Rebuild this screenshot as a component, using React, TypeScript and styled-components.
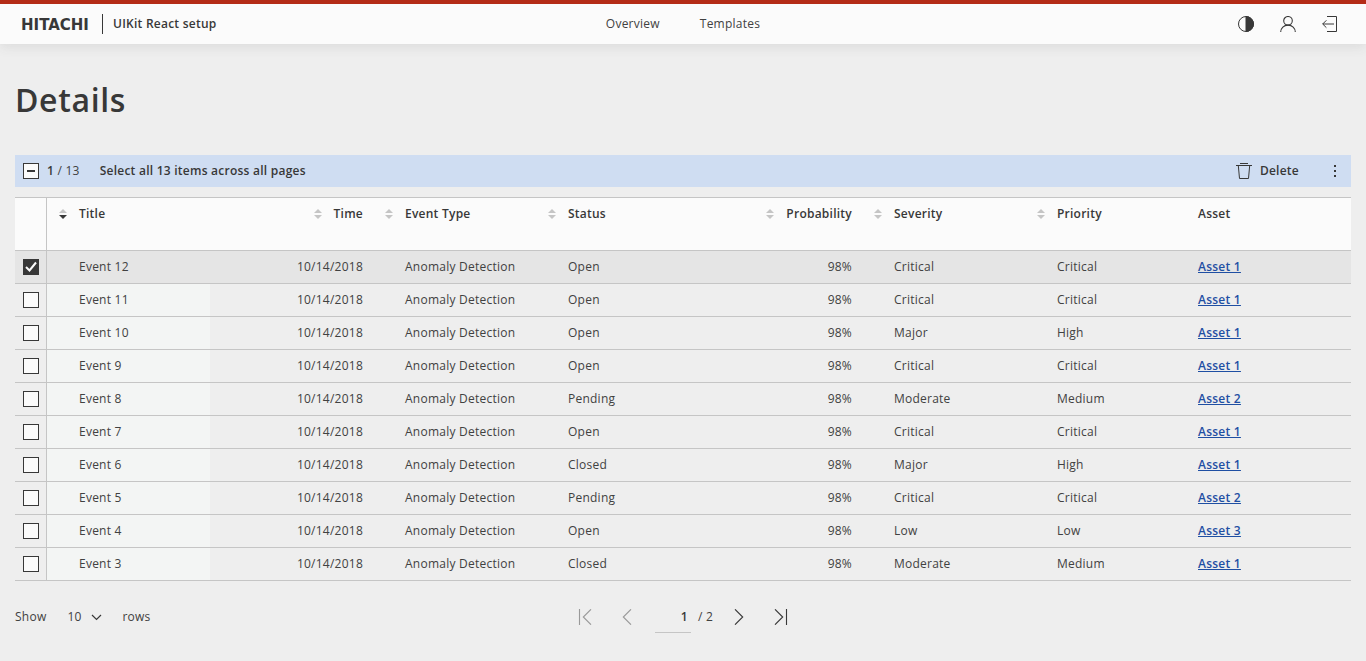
import { useEffect, useRef, useState } from "react";
import styled, { createGlobalStyle } from "styled-components";

const color = {
  brand: "#b42c17",
  page: "#eeeeee",
  surface: "#fbfbfb",
  selected: "#e5e5e5",
  sorted: "#f3f5f4",
  line: "#c5c5c5",
  ink: "#383838",
  text: "#414141",
  bulk: "#cfddf2",
  link: "#1f4fa3",
  muted: "#999999",
};

const GlobalStyle = createGlobalStyle`
  *, *::before, *::after { box-sizing: border-box; }
  body {
    margin: 0;
    background: ${color.page};
    color: ${color.text};
    font-family: "Open Sans", sans-serif;
    font-size: 12px;
    line-height: 16px;
    letter-spacing: 0.02em;
  }
  button, input, select {
    font: inherit;
    letter-spacing: inherit;
    color: inherit;
  }
`;

const Header = styled.header`
  display: grid;
  grid-template-columns: 1fr auto 1fr;
  align-items: center;
  height: 44px;
  padding: 0 20px;
  border-top: 4px solid ${color.brand};
  background: ${color.surface};
  box-shadow: 0 2px 12px rgba(65, 65, 65, 0.12);
`;

const Brand = styled.div`
  display: flex;
  align-items: center;
  color: ${color.ink};
  font-weight: 600;
`;

const LogoMark = styled.svg`
  display: block;
  margin-right: 10px;
  letter-spacing: normal;
`;

const ProductName = styled.span`
  padding-left: 10px;
  border-left: 1px solid ${color.ink};
  line-height: 20px;
`;

const Nav = styled.nav`
  display: flex;
  gap: 40px;
`;

const NavLink = styled.a`
  color: ${color.text};
  text-decoration: none;
`;

const HeaderActions = styled.div`
  display: flex;
  justify-content: flex-end;
  gap: 10px;
`;

const IconButton = styled.button`
  display: grid;
  place-items: center;
  width: 32px;
  height: 32px;
  padding: 0;
  border: 0;
  background: none;
  color: ${color.ink};
  cursor: pointer;

  &:disabled {
    color: ${color.muted};
    cursor: default;
  }
`;

const Main = styled.main`
  padding: 32px 15px 20px;
`;

const PageTitle = styled.h1`
  margin: 0 0 31px;
  color: ${color.ink};
  font-size: 32px;
  font-weight: 600;
  line-height: 48px;
  letter-spacing: 0.02em;
`;

const BulkBar = styled.div`
  display: flex;
  align-items: center;
  height: 32px;
  margin-bottom: 10px;
  padding-left: 8px;
  background: ${color.bulk};
`;

const BulkCount = styled.label`
  display: flex;
  align-items: center;
  gap: 8px;
`;

const Strong = styled.strong`
  color: ${color.ink};
  font-weight: 600;
`;

const TextButton = styled.button`
  display: flex;
  align-items: center;
  gap: 8px;
  padding: 0;
  border: 0;
  background: none;
  color: ${color.ink};
  font-weight: 600;
  cursor: pointer;
`;

const SelectAllButton = styled(TextButton)`
  margin-left: 20px;
`;

const BulkActions = styled.div`
  display: flex;
  align-items: center;
  gap: 20px;
  margin-left: auto;
`;

const CheckFrame = styled.span`
  display: inline-grid;
  place-items: center;
  width: 16px;
  height: 16px;

  > * {
    grid-area: 1 / 1;
  }
  > svg {
    pointer-events: none;
  }
`;

const CheckInput = styled.input`
  appearance: none;
  width: 16px;
  height: 16px;
  margin: 0;
  border: 1px solid ${color.ink};
  background: ${color.surface};

  &:checked:not(:indeterminate) {
    background: ${color.ink};
  }
`;

const Table = styled.table`
  width: 100%;
  table-layout: fixed;
  border-collapse: separate;
  border-spacing: 0;
`;

const CheckCol = styled.col`
  width: 32px;
`;

type Align = "left" | "right";

const HeadCell = styled.th<{ $align?: Align; $plain?: boolean }>`
  height: 54px;
  padding: 8px 10px 8px ${(p) => (p.$plain ? 10 : 0)}px;
  border-top: 1px solid ${color.line};
  border-bottom: 1px solid ${color.line};
  background: ${color.surface};
  color: ${color.ink};
  font-weight: 600;
  text-align: ${(p) => p.$align ?? "left"};
  vertical-align: top;
`;

const HeadCheckCell = styled(HeadCell)`
  border-right: 1px solid ${color.line};
`;

const SortButton = styled(TextButton)<{ $align?: Align }>`
  gap: 0;
  width: 100%;
  justify-content: ${(p) => (p.$align === "right" ? "flex-end" : "flex-start")};

  svg {
    flex: none;
    margin: 0 10px;
  }
`;

const Row = styled.tr<{ $selected: boolean }>`
  background: ${(p) => (p.$selected ? color.selected : "transparent")};
`;

const Cell = styled.td<{ $align?: Align; $plain?: boolean; $sorted?: boolean }>`
  height: 33px;
  padding: 0 10px 0 ${(p) => (p.$plain ? 10 : 32)}px;
  border-bottom: 1px solid ${color.line};
  background: ${(p) => (p.$sorted ? color.sorted : "transparent")};
  text-align: ${(p) => p.$align ?? "left"};
  white-space: nowrap;
`;

const CheckCell = styled.td`
  height: 33px;
  padding: 0 0 0 8px;
  border-right: 1px solid ${color.line};
  border-bottom: 1px solid ${color.line};
  line-height: 0;
`;

const AssetLink = styled.a`
  color: ${color.link};
  font-weight: 600;
  text-decoration: underline;
`;

const Footer = styled.footer`
  display: grid;
  grid-template-columns: 1fr auto 1fr;
  align-items: center;
  margin-top: 20px;
`;

const PageSize = styled.div`
  display: flex;
  align-items: center;
`;

const SelectFrame = styled.span`
  display: grid;
  align-items: center;
  justify-items: end;
  width: 46px;
  margin: 0 18px 0 12px;

  > * {
    grid-area: 1 / 1;
  }
  > svg {
    pointer-events: none;
  }
`;

const Select = styled.select`
  appearance: none;
  width: 100%;
  height: 32px;
  padding: 0 0 0 9px;
  border: 0;
  border-radius: 0;
  background: none;
`;

const Pager = styled.nav`
  display: flex;
  align-items: center;
  gap: 10px;
`;

const PageInfo = styled.div`
  display: flex;
  align-items: center;
  gap: 7px;
  padding-left: 2px;
`;

const PageInput = styled.input`
  width: 36px;
  height: 32px;
  padding: 0 3px 0 0;
  border: 0;
  border-bottom: 1px solid ${color.line};
  background: none;
  color: ${color.ink};
  font-weight: 600;
  text-align: right;
`;

function Logo() {
  return (
    <LogoMark width="72" height="20" viewBox="0 0 72 20" role="img" aria-label="Hitachi">
      <text
        x="1"
        y="16"
        fill="currentColor"
        fontFamily="DejaVu Sans, sans-serif"
        fontSize="15"
        fontWeight="700"
      >
        HITACHI
      </text>
    </LogoMark>
  );
}

function Contrast() {
  return (
    <svg width="16" height="16" viewBox="0 0 16 16" fill="none" stroke="currentColor">
      <circle cx="8" cy="8" r="7.5" />
      <path d="M8 .5a7.5 7.5 0 0 1 0 15z" fill="currentColor" />
    </svg>
  );
}

function User() {
  return (
    <svg width="16" height="16" viewBox="0 0 16 16" fill="none" stroke="currentColor" strokeWidth="1.1">
      <circle cx="8" cy="4.8" r="4.3" />
      <path d="M.7 16c0-4 3.2-6.9 7.3-6.9s7.3 2.9 7.3 6.9" />
    </svg>
  );
}

function LogOut() {
  return (
    <svg width="16" height="16" viewBox="0 0 16 16" fill="none" stroke="currentColor">
      <path d="M5 .5h9.500v15H5M12 8H.7M4.400 4.300.7 8l3.700 3.700" />
    </svg>
  );
}

function Trash() {
  return (
    <svg width="16" height="16" viewBox="0 0 16 16" fill="none" stroke="currentColor">
      <path d="M4 .5h8M0 2.500h16M2.300 2.500l1.200 13h9l1.200-13" />
    </svg>
  );
}

function MoreDots() {
  return (
    <svg width="16" height="16" viewBox="0 0 16 16" fill="currentColor">
      <path d="M7 2h2v2H7zM7 7h2v2H7zM7 12h2v2H7z" />
    </svg>
  );
}

function SortArrows({ descending }: { descending?: boolean }) {
  return (
    <svg width="12" height="16" viewBox="0 0 12 16">
      <path d="M6 3l4 4H2z" fill={color.line} />
      <path d="M6 13l4-4H2z" fill={descending ? color.ink : color.line} />
    </svg>
  );
}

function ChevronDown() {
  return (
    <svg width="16" height="16" viewBox="0 0 16 16" fill="none" stroke={color.ink} strokeWidth="1.2">
      <path d="M4 6l4.500 4.500L13 6" />
    </svg>
  );
}

const pagerPaths = {
  first: "M2.500 0v16M14 .3 6.300 8l7.700 7.700",
  previous: "M12 .3 4.300 8l7.700 7.700",
  next: "M4 .3 11.700 8 4 15.700",
  last: "M13.500 0v16M2 .3 9.700 8 2 15.700",
};

function PagerIcon({ kind }: { kind: keyof typeof pagerPaths }) {
  return (
    <svg width="16" height="16" viewBox="0 0 16 16" fill="none" stroke="currentColor" strokeWidth="1.1">
      <path d={pagerPaths[kind]} />
    </svg>
  );
}

interface CheckBoxProps {
  id?: string;
  label?: string;
  checked: boolean;
  mixed?: boolean;
  onToggle: () => void;
}

function CheckBox({ id, label, checked, mixed = false, onToggle }: CheckBoxProps) {
  const ref = useRef<HTMLInputElement>(null);
  useEffect(() => {
    if (ref.current) ref.current.indeterminate = mixed;
  }, [mixed]);
  return (
    <CheckFrame>
      <CheckInput ref={ref} id={id} type="checkbox" aria-label={label} checked={checked} onChange={onToggle} />
      {mixed && (
        <svg width="16" height="16" viewBox="0 0 16 16">
          <path d="M4 7h8v2H4z" fill={color.ink} />
        </svg>
      )}
      {checked && !mixed && (
        <svg width="16" height="16" viewBox="0 0 16 16" fill="none" stroke={color.surface} strokeWidth="2">
          <path d="M3 8l3.500 3.500L13 3.500" />
        </svg>
      )}
    </CheckFrame>
  );
}

interface EventRow {
  title: string;
  type: string;
  status: string;
  severity: string;
  priority: string;
  asset: string;
}

const event = (n: number, status: string, severity: string, priority: string, asset: number): EventRow => ({
  title: `Event ${n}`,
  type: "Anomaly Detection",
  status,
  severity,
  priority,
  asset: `Asset ${asset}`,
});

const events: EventRow[] = [
  event(12, "Open", "Critical", "Critical", 1),
  event(11, "Open", "Critical", "Critical", 1),
  event(10, "Open", "Major", "High", 1),
  event(9, "Open", "Critical", "Critical", 1),
  event(8, "Pending", "Moderate", "Medium", 2),
  event(7, "Open", "Critical", "Critical", 1),
  event(6, "Closed", "Major", "High", 1),
  event(5, "Pending", "Critical", "Critical", 2),
  event(4, "Open", "Low", "Low", 3),
  event(3, "Closed", "Moderate", "Medium", 1),
];

const columns: { name: string; align?: Align; descending?: boolean }[] = [
  { name: "Title", descending: true },
  { name: "Time", align: "right" },
  { name: "Event Type" },
  { name: "Status" },
  { name: "Probability", align: "right" },
  { name: "Severity" },
  { name: "Priority" },
];

const total = 13;

export default function App() {
  const [selected, setSelected] = useState<string[]>(["Event 12"]);
  const [page, setPage] = useState("1");
  const [pageSize, setPageSize] = useState("10");

  const toggle = (title: string) =>
    setSelected((now) => (now.includes(title) ? now.filter((t) => t !== title) : [...now, title]));
  const toggleAll = () => setSelected((now) => (now.length ? [] : events.map((e) => e.title)));

  return (
    <>
      <GlobalStyle />
      <Header>
        <Brand>
          <Logo />
          <ProductName>UIKit React setup</ProductName>
        </Brand>
        <Nav aria-label="Main">
          <NavLink href="#overview">Overview</NavLink>
          <NavLink href="#templates">Templates</NavLink>
        </Nav>
        <HeaderActions>
          <IconButton aria-label="Change theme"><Contrast /></IconButton>
          <IconButton aria-label="Account"><User /></IconButton>
          <IconButton aria-label="Log out"><LogOut /></IconButton>
        </HeaderActions>
      </Header>
      <Main>
        <PageTitle>Details</PageTitle>
        <BulkBar>
          <BulkCount htmlFor="select-page">
            <CheckBox
              id="select-page"
              checked={selected.length > 0}
              mixed={selected.length > 0 && selected.length < events.length}
              onToggle={toggleAll}
            />
            <span>
              <Strong>{selected.length}</Strong> / {total}
            </span>
          </BulkCount>
          <SelectAllButton>Select all {total} items across all pages</SelectAllButton>
          <BulkActions>
            <TextButton>
              <Trash />
              Delete
            </TextButton>
            <IconButton aria-label="More actions"><MoreDots /></IconButton>
          </BulkActions>
        </BulkBar>
        <Table>
          <colgroup>
            <CheckCol />
            <col span={8} />
          </colgroup>
          <thead>
            <tr>
              <HeadCheckCell aria-label="Selection" />
              {columns.map((c) => (
                <HeadCell key={c.name} $align={c.align} aria-sort={c.descending ? "descending" : undefined}>
                  <SortButton $align={c.align}>
                    <SortArrows descending={c.descending} />
                    {c.name}
                  </SortButton>
                </HeadCell>
              ))}
              <HeadCell $plain>Asset</HeadCell>
            </tr>
          </thead>
          <tbody>
            {events.map((e) => {
              const isSelected = selected.includes(e.title);
              return (
                <Row key={e.title} $selected={isSelected}>
                  <CheckCell>
                    <CheckBox label={`Select ${e.title}`} checked={isSelected} onToggle={() => toggle(e.title)} />
                  </CheckCell>
                  <Cell $sorted={!isSelected}>{e.title}</Cell>
                  <Cell $align="right">10/14/2018</Cell>
                  <Cell>{e.type}</Cell>
                  <Cell>{e.status}</Cell>
                  <Cell $align="right">98%</Cell>
                  <Cell>{e.severity}</Cell>
                  <Cell>{e.priority}</Cell>
                  <Cell $plain>
                    <AssetLink href="#asset">{e.asset}</AssetLink>
                  </Cell>
                </Row>
              );
            })}
          </tbody>
        </Table>
        <Footer>
          <PageSize>
            <label htmlFor="page-size">Show</label>
            <SelectFrame>
              <Select id="page-size" value={pageSize} onChange={(e) => setPageSize(e.target.value)}>
                <option>5</option>
                <option>10</option>
                <option>20</option>
              </Select>
              <ChevronDown />
            </SelectFrame>
            <span>rows</span>
          </PageSize>
          <Pager aria-label="Pages">
            <IconButton aria-label="First page" disabled><PagerIcon kind="first" /></IconButton>
            <IconButton aria-label="Previous page" disabled><PagerIcon kind="previous" /></IconButton>
            <PageInfo>
              <PageInput aria-label="Page" value={page} onChange={(e) => setPage(e.target.value)} />
              <span>/ 2</span>
            </PageInfo>
            <IconButton aria-label="Next page"><PagerIcon kind="next" /></IconButton>
            <IconButton aria-label="Last page"><PagerIcon kind="last" /></IconButton>
          </Pager>
        </Footer>
      </Main>
    </>
  );
}
